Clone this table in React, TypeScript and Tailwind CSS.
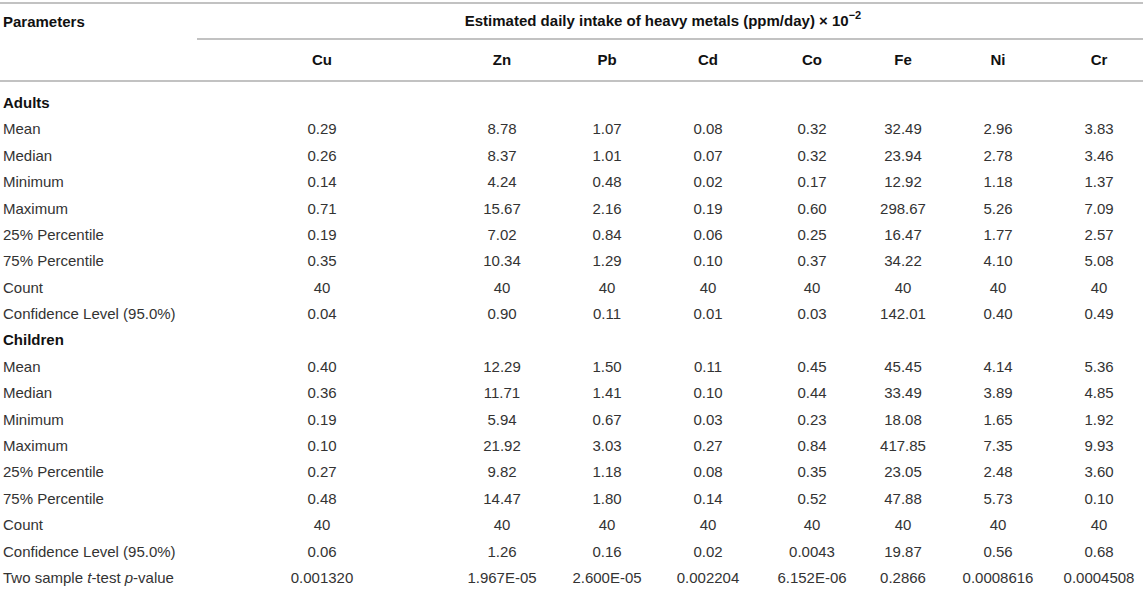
import React from 'react';

const metals = ['Cu', 'Zn', 'Pb', 'Cd', 'Co', 'Fe', 'Ni', 'Cr'];

// Rows of the two groups: label followed by one value per metal
const adults: [string, string[]][] = [
  ['Mean', ['0.29', '8.78', '1.07', '0.08', '0.32', '32.49', '2.96', '3.83']],
  ['Median', ['0.26', '8.37', '1.01', '0.07', '0.32', '23.94', '2.78', '3.46']],
  ['Minimum', ['0.14', '4.24', '0.48', '0.02', '0.17', '12.92', '1.18', '1.37']],
  ['Maximum', ['0.71', '15.67', '2.16', '0.19', '0.60', '298.67', '5.26', '7.09']],
  ['25% Percentile', ['0.19', '7.02', '0.84', '0.06', '0.25', '16.47', '1.77', '2.57']],
  ['75% Percentile', ['0.35', '10.34', '1.29', '0.10', '0.37', '34.22', '4.10', '5.08']],
  ['Count', ['40', '40', '40', '40', '40', '40', '40', '40']],
  ['Confidence Level (95.0%)', ['0.04', '0.90', '0.11', '0.01', '0.03', '142.01', '0.40', '0.49']],
];

const children: [string, string[]][] = [
  ['Mean', ['0.40', '12.29', '1.50', '0.11', '0.45', '45.45', '4.14', '5.36']],
  ['Median', ['0.36', '11.71', '1.41', '0.10', '0.44', '33.49', '3.89', '4.85']],
  ['Minimum', ['0.19', '5.94', '0.67', '0.03', '0.23', '18.08', '1.65', '1.92']],
  ['Maximum', ['0.10', '21.92', '3.03', '0.27', '0.84', '417.85', '7.35', '9.93']],
  ['25% Percentile', ['0.27', '9.82', '1.18', '0.08', '0.35', '23.05', '2.48', '3.60']],
  ['75% Percentile', ['0.48', '14.47', '1.80', '0.14', '0.52', '47.88', '5.73', '0.10']],
  ['Count', ['40', '40', '40', '40', '40', '40', '40', '40']],
  ['Confidence Level (95.0%)', ['0.06', '1.26', '0.16', '0.02', '0.0043', '19.87', '0.56', '0.68']],
];

const pValues = ['0.001320', '1.967E-05', '2.600E-05', '0.002204', '6.152E-06', '0.2866', '0.0008616', '0.0004508'];

function DataRow({ label, values }: { label: React.ReactNode; values: string[] }) {
  return (
    <div className="grid grid-cols-[197px_250px_110px_100px_102px_106px_76px_114px_88px] h-[26.4px] items-center">
      <div className="pl-[3px] whitespace-nowrap">{label}</div>
      {values.map((v, i) => (
        <div key={i} className="text-center whitespace-nowrap">{v}</div>
      ))}
    </div>
  );
}

function GroupRow({ title }: { title: string }) {
  return (
    <div className="h-[26.4px] flex items-center pl-[3px] font-bold text-[#111]">{title}</div>
  );
}

export default function App() {
  return (
    <div
      className="w-[1143px] h-[589px] bg-white text-[15px] text-[#333] overflow-hidden"
      style={{ fontFamily: '"Liberation Sans", Arial, sans-serif' }}
    >
      {/* Table header */}
      <div className="mt-[2px] grid grid-cols-[197px_250px_110px_100px_102px_106px_76px_114px_88px] border-t-2 border-b-2 border-[#c2c2c2]">
        <div className="row-span-2">
          <div className="h-[36px] flex items-center pl-[3px] font-bold text-[#111]">Parameters</div>
        </div>
        <div className="col-span-8 h-[36px] flex items-center justify-center border-b-2 border-[#c2c2c2] font-bold text-[#111] pr-[14px] whitespace-pre">
          Estimated daily intake of heavy metals (ppm/day) × 10
          <sup className="text-[11px] leading-none">−2</sup>
        </div>
        {metals.map((m) => (
          <div key={m} className="h-[40px] flex items-center justify-center font-bold text-[#111]">
            {m}
          </div>
        ))}
      </div>

      {/* Table body */}
      <div className="pt-[8px]">
        <GroupRow title="Adults" />
        {adults.map(([label, values]) => (
          <DataRow key={'a' + label} label={label} values={values} />
        ))}
        <GroupRow title="Children" />
        {children.map(([label, values]) => (
          <DataRow key={'c' + label} label={label} values={values} />
        ))}
        <DataRow
          label={
            <>
              Two sample <i>t</i>-test <i>p</i>-value
            </>
          }
          values={pValues}
        />
      </div>
    </div>
  );
}
